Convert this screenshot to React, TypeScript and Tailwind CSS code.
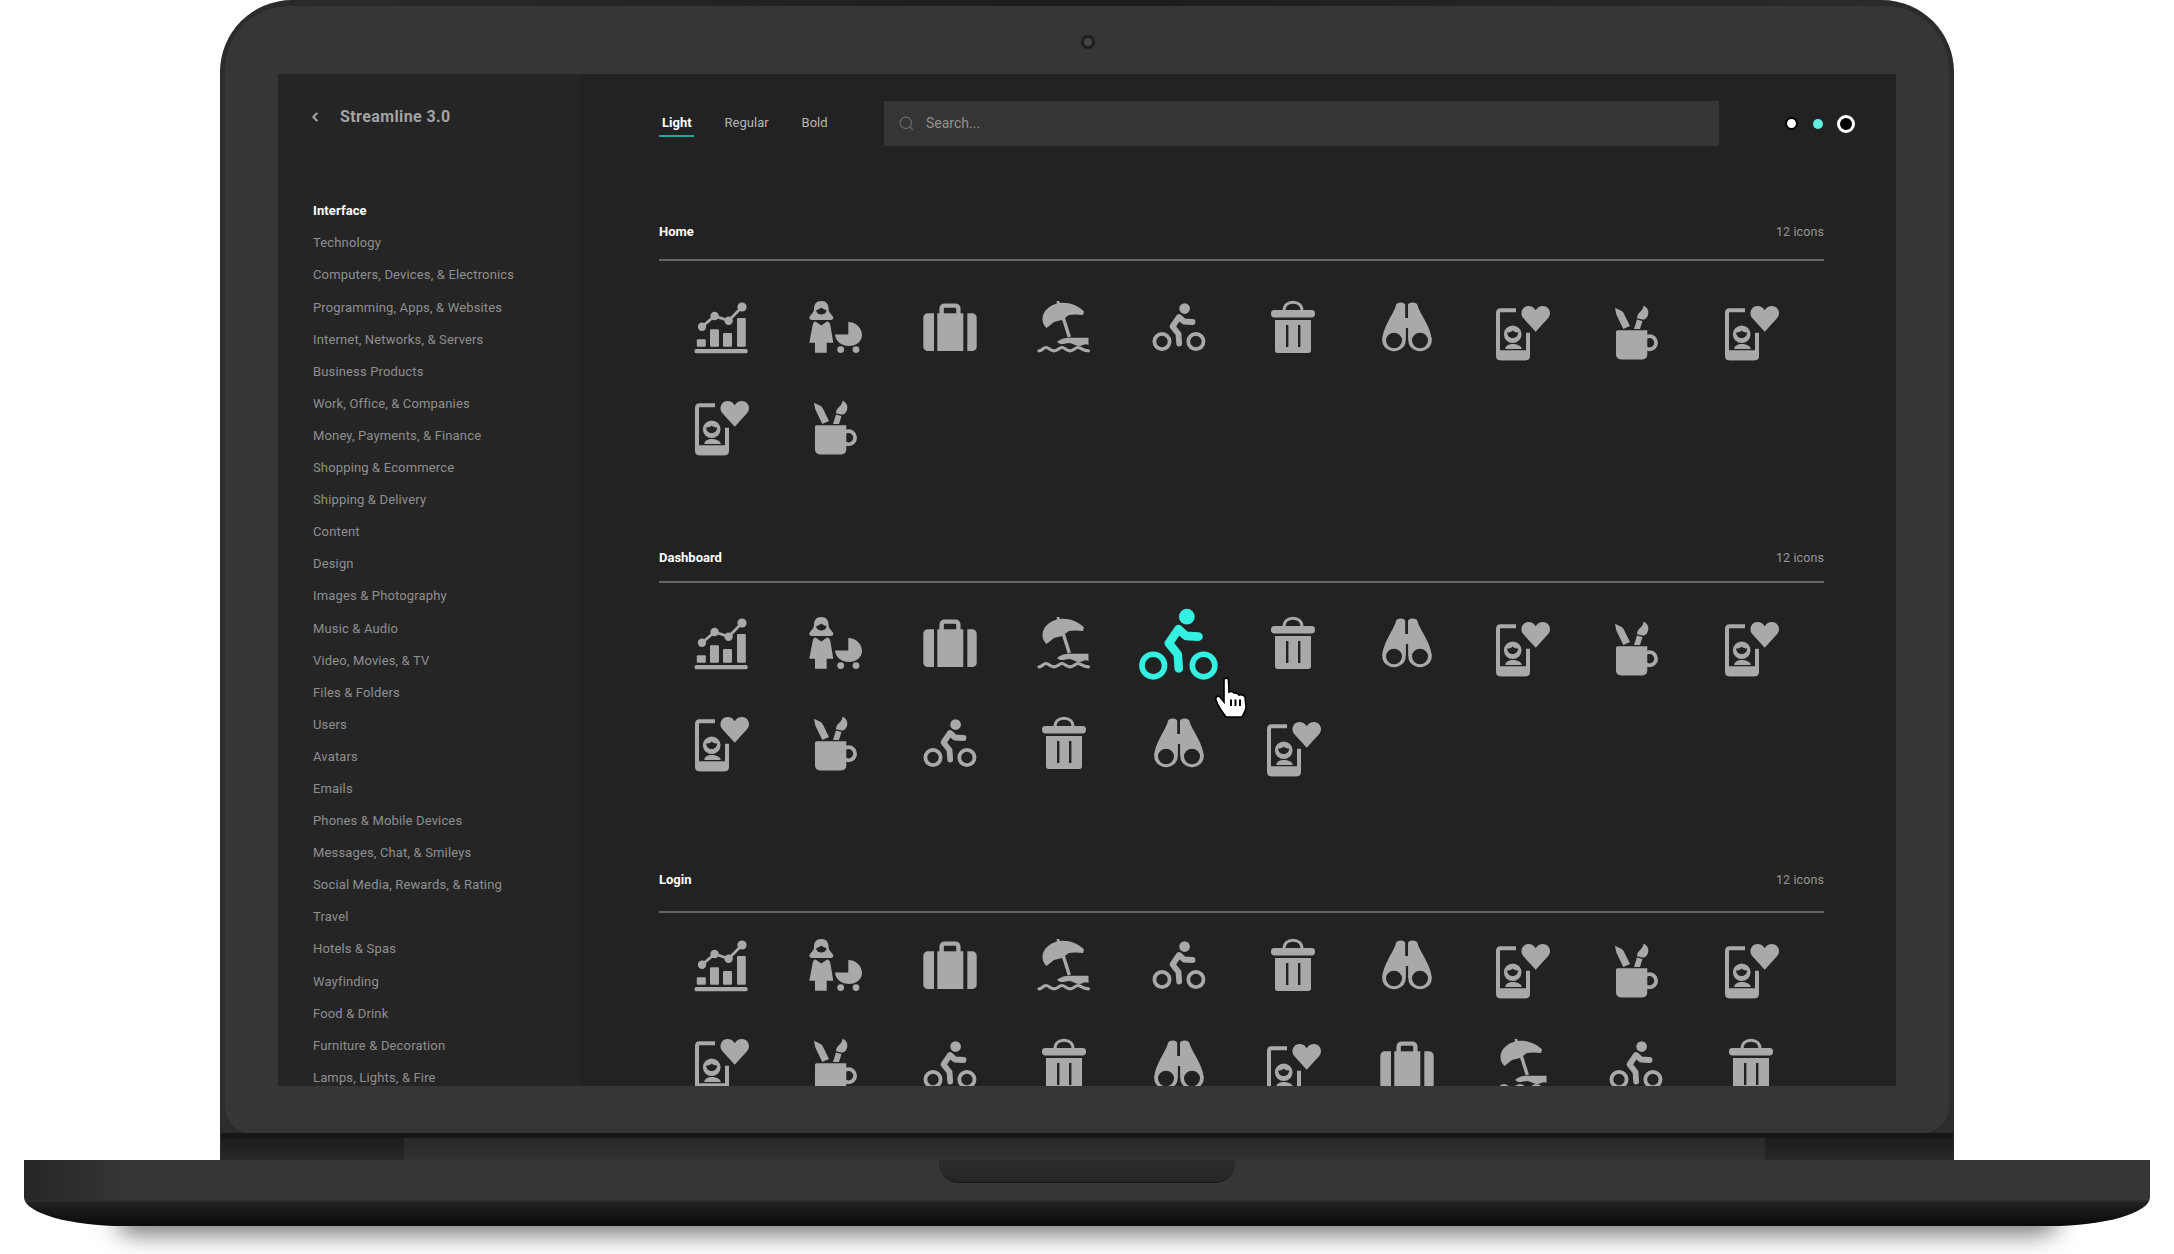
import React from 'react';
import { ChevronLeft, Search } from 'lucide-react';

const CUT = '#222222';

const ChartIcon = () => (
  <>
    <rect x="5.6" y="53" width="53" height="4.3" rx="1.5" />
    <rect x="7.8" y="43.3" width="9" height="7.5" rx="1" />
    <rect x="21" y="33.3" width="9" height="17.5" rx="1" />
    <rect x="34" y="37" width="9" height="13.8" rx="1" />
    <rect x="48" y="22" width="8.8" height="28.8" rx="1" />
    <path d="M13 30.7L25.6 20L39.6 24.7L53 11" fill="none" stroke="currentColor" strokeWidth="2.8" />
    <circle cx="13" cy="30.7" r="4.2" />
    <circle cx="25.6" cy="20" r="4.2" />
    <circle cx="39.6" cy="24.7" r="4.2" />
    <circle cx="53" cy="11" r="4.6" />
  </>
);

const WomanIcon = () => (
  <>
    <path d="M18.3 5C13 5 11 8.5 11 13C11 17 7 19 6.3 21.5C6 23.5 8 24 10 24H26.5C28.5 24 30.6 23.5 30.3 21.5C29.6 19 25.6 17 25.6 13C25.6 8.5 23.5 5 18.3 5Z" />
    <path d="M13 14.5C15 13.5 16.5 13 18.3 11.5C20 13 21.7 13.5 23.7 14.5C22.7 17.5 20.5 18.5 18.3 18.5C16 18.5 14 17.5 13 14.5Z" fill={CUT} />
    <path d="M12.5 25.5L18.3 29.5L24 25.5C26 25.5 27 27 27.5 30L30.3 46.7H23.7V56.7H12V46.7H6.3L9.5 30C10 27 10.5 25.5 12.5 25.5Z" />
    <path d="M45.3 26C53 26 59 32 59 39C59 45.5 53 50 46 50C39 50 32.5 45.5 32 38.5H45.3Z" />
    <circle cx="37.7" cy="53.6" r="3.4" />
    <circle cx="53" cy="53.6" r="3.4" />
  </>
);

const SuitcaseIcon = () => (
  <>
    <path d="M5.3 22C5.3 19 7.5 17.3 10 17.3H16V55H10C7.5 55 5.3 53.3 5.3 50.5Z" />
    <rect x="19.3" y="17.3" width="26" height="37.7" />
    <path d="M49.3 17.3H54C56.5 17.3 58.7 19 58.7 22V50.5C58.7 53.3 56.5 55 54 55H49.3Z" />
    <path d="M23.6 18V13C23.6 10.8 25 9.6 27 9.6H37C39 9.6 40.4 10.8 40.4 13V18" fill="none" stroke="currentColor" strokeWidth="4.4" />
  </>
);

const BeachIcon = () => (
  <>
    <path d="M14.5 32C9 27 9.5 19 14 14C17 10.5 21 8.5 25 7.5L24.5 5L27 5L28 7C36 6 46 9 52 15.5L51 19L43 18.5L37 19L30 24L22 26Z" />
    <path d="M31.3 22L37.3 41" fill="none" stroke="currentColor" strokeWidth="3.4" />
    <path d="M25 46C29 42.5 33 41.7 38 41.7H56.5V49C53 47 51 50 47 50C43 50 41 47 37 47C33 47 30 50 25 46Z" />
    <path d="M7 54.8C10 54.8 11 51.5 14 51.5C17 51.5 18 54.8 22 54.8C26 54.8 27 51.5 30 51.5C33 51.5 34 54.8 38 54.8C42 54.8 43 51.5 46 51.5C49 51.5 50 54.8 56.5 54.8" fill="none" stroke="currentColor" strokeWidth="3.2" strokeLinecap="round" />
  </>
);

const BikeIcon = () => (
  <>
    <circle cx="37.6" cy="12.6" r="5.3" />
    <circle cx="15" cy="45.5" r="7.6" fill="none" stroke="currentColor" strokeWidth="3.8" />
    <circle cx="48.9" cy="45.5" r="7.6" fill="none" stroke="currentColor" strokeWidth="3.8" />
    <path d="M45.5 26L37 25.5L32 21L25.5 30.5L31.5 38L32.2 47.5" fill="none" stroke="currentColor" strokeWidth="5.8" strokeLinecap="round" strokeLinejoin="round" />
  </>
);

const TrashIcon = () => (
  <>
    <path d="M23 15C23 9 27 6.2 32 6.2C37 6.2 41 9 41 15" fill="none" stroke="currentColor" strokeWidth="3" />
    <rect x="10" y="14" width="44" height="7.4" rx="3.4" />
    <path d="M14 24H50V54.5C50 56 49 57 47.5 57H16.5C15 57 14 56 14 54.5Z" />
    <rect x="25" y="29" width="2.4" height="22" fill={CUT} />
    <rect x="37" y="29" width="2.4" height="22" fill={CUT} />
  </>
);

const BinocularsIcon = () => (
  <>
    <path d="M20.7 10C21 5.5 30.2 5.5 30.2 9V22H33V9C33 5.5 42.5 5.5 42.8 10C44 16 56.7 32 56.7 44H7.3C7.3 32 19.5 16 20.7 10Z" />
    <ellipse cx="19" cy="44.5" rx="11.7" ry="10.7" />
    <ellipse cx="45" cy="44.5" rx="11.7" ry="10.7" />
    <ellipse cx="19" cy="44.5" rx="8" ry="7.8" fill={CUT} />
    <ellipse cx="45" cy="44.5" rx="8" ry="7.8" fill={CUT} />
    <rect x="30.9" y="32" width="2.2" height="24" fill={CUT} />
  </>
);

const PhoneIcon = () => (
  <>
    <path d="M26 9.3H10.5Q8 9.3 8 12V55Q8 57.3 10.5 57.3H35.5Q38 57.3 38 55V31.7" fill="none" stroke="currentColor" strokeWidth="4" />
    <path d="M7 49.3H39V55.5C39 58 38 59.3 35.5 59.3H10.5C8 59.3 7 58 7 55.5Z" />
    <circle cx="22.7" cy="33.3" r="8.8" />
    <path d="M17 31.5C19.5 31.5 21.5 31 22.7 29.5C24 31 26 31.5 28.3 31.5C27.8 35.3 25.3 37 22.7 37C20 37 17.5 35.3 17 31.5Z" fill={CUT} />
    <path d="M15.3 48C15.3 44.5 19 43 22.7 43C26.5 43 31.7 44.5 31.7 48Z" />
    <path d="M45.7 30.7L33.2 17C29 11.5 33 5 38.5 5C41.5 5 44.2 6.5 45.7 9.3C47.2 6.5 49.9 5 52.9 5C58.4 5 62.6 11.5 58.2 17Z" />
  </>
);

const MugIcon = () => (
  <>
    <path d="M12 31C12 30 12.7 29.3 13.7 29.3H43.3V53.5C43.3 56.5 41.5 58.4 38.5 58.4H17C14 58.4 12 56.5 12 53.5Z" />
    <circle cx="45.5" cy="41.7" r="6.6" fill="none" stroke="currentColor" strokeWidth="3.8" />
    <path d="M11 6.7L17.7 10C18.6 10.5 19.2 11.2 19.6 12L26 25L19.3 28L12.8 14.5C12.3 13.5 12.2 12.8 12 12Z" />
    <path d="M30 28L33 18.5L38.5 20L36 28Z" />
    <path d="M39.5 4.8C43 6 45 9.5 44.2 13C43.5 16.5 41 19 38.2 18.5L33 17.3C33 14 34.5 12.5 36 11C37.8 9.3 39.5 7.5 39.5 4.8Z" />
  </>
);

const ICONS = {
  chart: ChartIcon,
  woman: WomanIcon,
  suitcase: SuitcaseIcon,
  beach: BeachIcon,
  bike: BikeIcon,
  trash: TrashIcon,
  binoculars: BinocularsIcon,
  phone: PhoneIcon,
  mug: MugIcon,
};

type IconName = keyof typeof ICONS;

const firstRow: IconName[] = ['chart', 'woman', 'suitcase', 'beach', 'bike', 'trash', 'binoculars', 'phone', 'mug', 'phone'];

const IconGrid = ({ names, low, active, className }: { names: IconName[]; low: number[]; active?: number; className: string }) => (
  <div className={`ml-[4.8px] grid grid-cols-[repeat(10,114.4px)] auto-rows-[100px] ${className}`}>
    {names.map((name, i) => {
      const Icon = ICONS[name];
      const isActive = i === active;
      return (
        <div key={i} className="flex items-center justify-center">
          <svg
            viewBox="0 0 64 64"
            fill="currentColor"
            className={`${isActive ? 'h-[95px] w-[95px] translate-y-[1px] text-[#33f0e0]' : 'h-16 w-16 text-[#a9a9a9]'} ${low.includes(i) ? 'translate-y-[5px]' : ''}`}
          >
            <Icon />
          </svg>
        </div>
      );
    })}
  </div>
);

const SectionHead = ({ title, className }: { title: string; className: string }) => (
  <div className={`flex h-5 items-center justify-between box-content border-b-2 border-[#666666] ${className}`}>
    <span className="text-[13px] font-bold text-white">{title}</span>
    <span className="text-[12.5px] tracking-[0.1px] text-[#969696]">12 icons</span>
  </div>
);

const navItems = [
  'Technology',
  'Computers, Devices, & Electronics',
  'Programming, Apps, & Websites',
  'Internet, Networks, & Servers',
  'Business Products',
  'Work, Office, & Companies',
  'Money, Payments, & Finance',
  'Shopping & Ecommerce',
  'Shipping & Delivery',
  'Content',
  'Design',
  'Images & Photography',
  'Music & Audio',
  'Video, Movies, & TV',
  'Files & Folders',
  'Users',
  'Avatars',
  'Emails',
  'Phones & Mobile Devices',
  'Messages, Chat, & Smileys',
  'Social Media, Rewards, & Rating',
  'Travel',
  'Hotels & Spas',
  'Wayfinding',
  'Food & Drink',
  'Furniture & Decoration',
  'Lamps, Lights, & Fire',
];

const Sidebar = () => (
  <aside className="h-full w-[301px] shrink-0 bg-[#252525] pl-[35px] pt-[31px]">
    <div className="flex h-6 items-center text-[#a3a3a3]">
      <ChevronLeft size={14} strokeWidth={3.4} className="-ml-[5px]" />
      <span className="ml-[18px] text-[16px] font-bold tracking-[0.4px]">Streamline 3.0</span>
    </div>
    <ul className="mt-[66px]">
      <li className="flex h-[32.1px] items-center text-[13px] font-bold tracking-[0.1px] text-white">Interface</li>
      {navItems.map((item) => (
        <li key={item} className="flex h-[32.1px] items-center text-[13px] tracking-[0.15px] text-[#8f8f8f]">
          {item}
        </li>
      ))}
    </ul>
  </aside>
);

const TopBar = () => (
  <div className="flex h-[45px] items-center">
    <div className="mb-[2px] flex w-[225px] shrink-0 items-center gap-[30px] text-[13px] text-[#b5b5b5]">
      <div className="relative font-bold text-white">
        <span className="px-[3px]">Light</span>
        <div className="absolute -bottom-[5px] left-0 h-[2px] w-[35px] bg-[#1fa8a0]" />
      </div>
      <span>Regular</span>
      <span className="ml-[3px]">Bold</span>
    </div>
    <div className="flex h-[45px] w-[835px] shrink-0 items-center bg-[#353535] pl-[14px] text-[14px] text-[#929292]">
      <Search size={17} strokeWidth={1.6} className="text-[#6c6c6c]" />
      <span className="ml-[11px]">Search...</span>
    </div>
    <div className="ml-[66px] flex items-center">
      <div className="h-[13px] w-[13px] rounded-full border-[2px] border-black bg-white" />
      <div className="ml-[15px] h-[10px] w-[10px] rounded-full bg-[#62efe3]" />
      <div className="ml-[14px] h-[18px] w-[18px] rounded-full border-[3px] border-white bg-black" />
    </div>
  </div>
);

const Main = () => (
  <main className="h-full flex-1 overflow-hidden bg-[#222222] pl-[80px] pt-[27px]">
    <TopBar />
    <div className="w-[1165px]">
      <SectionHead title="Home" className="mt-[76px] pb-[17px]" />
      <IconGrid className="pt-[17px]" names={[...firstRow, 'phone', 'mug']} low={[7, 8, 9]} />
      <SectionHead title="Dashboard" className="mt-[70px] pb-[13px]" />
      <IconGrid
        className="pt-[11px]"
        names={[...firstRow, 'phone', 'mug', 'bike', 'trash', 'binoculars', 'phone']}
        low={[7, 8, 9, 15]}
        active={4}
      />
      <SectionHead title="Login" className="mt-[76px] pb-[21px]" />
      <IconGrid
        className="pt-[3px]"
        names={[...firstRow, 'phone', 'mug', 'bike', 'trash', 'binoculars', 'phone', 'suitcase', 'beach', 'bike', 'trash']}
        low={[7, 8, 9, 15]}
      />
    </div>
  </main>
);

const HandCursor = () => (
  <svg viewBox="0 0 32 41" className="absolute left-[1215px] top-[677px] h-[41px] w-[32px]">
    <path
      d="M9 3C9 .5 13.5 .5 13.5 3L14 15C16 14 18 15 19 16C21 15.5 23 16.5 24 18C26 17 29 18 30 20L31 30C31 33 28 38 27 40H11C8 36 2 27 1 23C0 20 3 18 5 20L9 25Z"
      fill="#ffffff"
      stroke="#000000"
      strokeWidth="1.6"
    />
    <path d="M16 22.5V29M20.5 22.5V29M25 22.5V29" stroke="#000000" strokeWidth="2" />
  </svg>
);

const App: React.FC = () => {
  return (
    <div className="relative h-[1254px] w-[2174px] overflow-hidden bg-white font-['Roboto',sans-serif]">
      <div className="ml-[220px] flex h-[1160px] w-[1734px] flex-col rounded-t-[72px] bg-gradient-to-r from-[#2c2c2c] via-[#1c1c1c] to-[#2c2c2c] px-[5px] pt-[6px]">
        <div className="relative h-[1127px] shrink-0 rounded-t-[64px] rounded-b-[26px] bg-[#363636] px-[53px] pt-[68px]">
          <div className="absolute left-[856px] top-[29px] h-[14px] w-[14px] rounded-full border-[3px] border-[#1e1e1e] bg-[#444444]" />
          <div className="flex h-[1012px] overflow-hidden">
            <Sidebar />
            <Main />
          </div>
        </div>
      </div>
      <div className="-mt-[27px] ml-[221px] flex h-[27px] w-[1732px] flex-col">
        <div className="h-[5px] bg-[#161616]" />
        <div className="flex flex-1">
          <div className="w-[183px] bg-gradient-to-b from-[#1c1c1c] to-[#282828]" />
          <div className="flex-1 bg-gradient-to-b from-[#292929] to-[#313131]" />
          <div className="w-[188px] bg-gradient-to-b from-[#1c1c1c] to-[#282828]" />
        </div>
      </div>
      <div className="absolute left-[120px] top-[1200px] h-[26px] w-[1934px] rounded-[40px] shadow-[0_4px_24px_4px_rgba(0,0,0,0.55)]" />
      <div className="relative ml-[24px] h-[66px] w-[2126px] overflow-hidden rounded-bl-[100px_29px] rounded-br-[100px_29px]">
        <div className="flex h-[40px] justify-center bg-gradient-to-r from-[#262626] via-[#363636] via-[5%] to-[#363636]">
          <div className="h-[23px] w-[296px] rounded-b-[20px] border-b border-[#1a1a1a] bg-gradient-to-b from-[#2c2c2c] to-[#262626]" />
        </div>
        <div className="h-[26px] border-t-[2px] border-[#2c2c2c] bg-gradient-to-b from-[#212121] to-[#0b0b0b]" />
      </div>
      <HandCursor />
    </div>
  );
};

export default App;
